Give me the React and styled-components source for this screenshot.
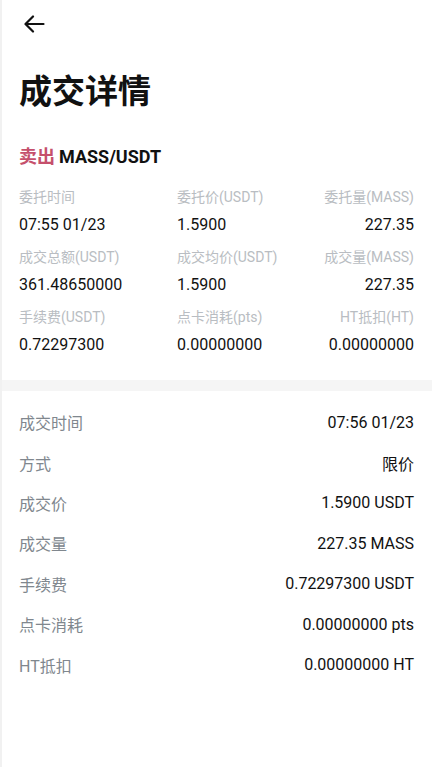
import styled, { createGlobalStyle } from "styled-components"

const GlobalStyle = createGlobalStyle`
    html, body {
        margin: 0;
        padding: 0;
        background: #fff;
    }
    body {
        font-family: Roboto, "Noto Sans CJK SC", sans-serif;
        color: #111;
    }
`

const Page = styled.div`
    width: 432px;
    min-height: 767px;
    box-sizing: border-box;
    border-left: 2px solid #f1f1f1;
    background: #fff;
`

const TopBar = styled.div`
    height: 48px;
    display: flex;
    align-items: center;
    padding-left: 22px;
`

const BackButton = styled.button`
    border: none;
    background: transparent;
    padding: 0;
    display: flex;
    color: #111;
`

const Title = styled.h1`
    margin: 0;
    padding: 24px 0 0 17px;
    font-size: 33px;
    line-height: 40px;
    font-weight: 700;
`

const Pair = styled.div`
    padding: 33px 17px 0;
    font-size: 18px;
    line-height: 24px;
    font-weight: 700;
`

const Side = styled.span`
    color: #c5506c;
    margin-right: 4px;
`

const Summary = styled.div`
    display: grid;
    grid-template-columns: 158px 1fr 1fr;
    row-gap: 13px;
    padding: 19px 18px 25px 17px;
`

const Cell = styled.div`
    display: flex;
    flex-direction: column;
    gap: 8px;
    align-items: ${p => p.$right ? 'flex-end' : 'flex-start'};
`

const CellLabel = styled.span`
    font-size: 14px;
    line-height: 19px;
    color: #b9bdc2;
`

const CellValue = styled.span`
    font-size: 16px;
    line-height: 20px;
    color: #111;
`

const Divider = styled.div`
    height: 11px;
    background: #f5f5f5;
`

const List = styled.div`
    display: flex;
    flex-direction: column;
    padding: 11px 18px 0 17px;
`

const Row = styled.div`
    height: 40.4px;
    display: flex;
    align-items: center;
    justify-content: space-between;
    font-size: 16px;
`

const RowLabel = styled.span`
    color: #80878e;
`

const RowValue = styled.span`
    color: #111;
`

const summary = [
    ['委托时间', '07:55 01/23'],
    ['委托价(USDT)', '1.5900'],
    ['委托量(MASS)', '227.35'],
    ['成交总额(USDT)', '361.48650000'],
    ['成交均价(USDT)', '1.5900'],
    ['成交量(MASS)', '227.35'],
    ['手续费(USDT)', '0.72297300'],
    ['点卡消耗(pts)', '0.00000000'],
    ['HT抵扣(HT)', '0.00000000'],
]

const details = [
    ['成交时间', '07:56 01/23'],
    ['方式', '限价'],
    ['成交价', '1.5900 USDT'],
    ['成交量', '227.35 MASS'],
    ['手续费', '0.72297300 USDT'],
    ['点卡消耗', '0.00000000 pts'],
    ['HT抵扣', '0.00000000 HT'],
]

const App = () => {
    return <Page>
        <GlobalStyle />
        <TopBar>
            <BackButton type='button'>
                <svg width="21" height="18" viewBox="0 0 21 18" fill="none" stroke="currentColor" strokeWidth="2.2" strokeLinecap="round" strokeLinejoin="round">
                    <path d="M19.5 9H2" />
                    <path d="M9 1.5L1.5 9L9 16.5" />
                </svg>
            </BackButton>
        </TopBar>

        <Title>成交详情</Title>

        <Pair><Side>卖出</Side>MASS/USDT</Pair>

        <Summary>
            {summary.map(([label, value], i) => (
                <Cell key={label} $right={i % 3 === 2}>
                    <CellLabel>{label}</CellLabel>
                    <CellValue>{value}</CellValue>
                </Cell>
            ))}
        </Summary>

        <Divider />

        <List>
            {details.map(([label, value]) => (
                <Row key={label}>
                    <RowLabel>{label}</RowLabel>
                    <RowValue>{value}</RowValue>
                </Row>
            ))}
        </List>
    </Page>
}

export default App
